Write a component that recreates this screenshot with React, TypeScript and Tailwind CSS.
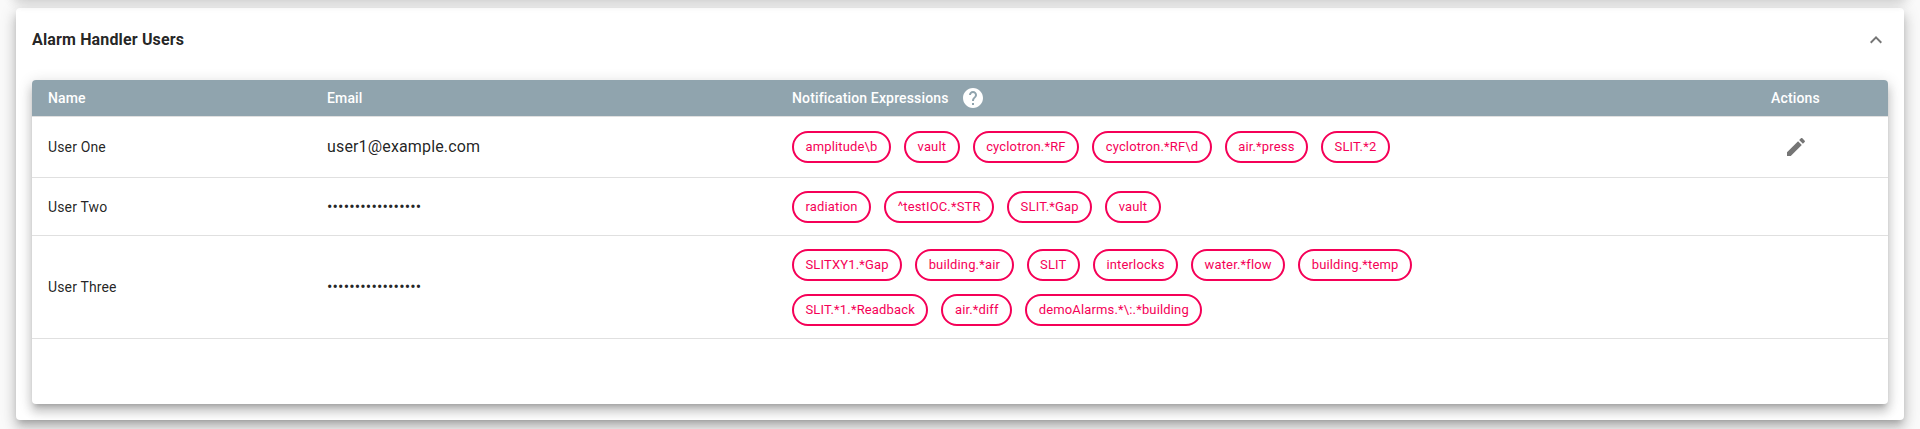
import type { ReactNode } from "react";

type User = { name: string; email: string; rows: string[][]; height: string; editable?: boolean };

const MASK = "•••••••••••••••••";

const users: User[] = [
  {
    name: "User One",
    email: "user1@example.com",
    rows: [["amplitude\\b", "vault", "cyclotron.*RF", "cyclotron.*RF\\d", "air.*press", "SLIT.*2"]],
    height: "h-[61px]",
    editable: true,
  },
  {
    name: "User Two",
    email: MASK,
    rows: [["radiation", "^testIOC.*STR", "SLIT.*Gap", "vault"]],
    height: "h-[58px]",
  },
  {
    name: "User Three",
    email: MASK,
    rows: [
      ["SLITXY1.*Gap", "building.*air", "SLIT", "interlocks", "water.*flow", "building.*temp"],
      ["SLIT.*1.*Readback", "air.*diff", "demoAlarms.*\\:.*building"],
    ],
    height: "h-[103px]",
  },
];

const panelShadow =
  "shadow-[0px_5px_6px_-3px_rgba(0,0,0,0.2),0px_9px_12px_1px_rgba(0,0,0,0.14),0px_3px_16px_2px_rgba(0,0,0,0.12)]";
const tableShadow =
  "shadow-[0px_5px_5px_-3px_rgba(0,0,0,0.2),0px_8px_10px_1px_rgba(0,0,0,0.14),0px_3px_14px_2px_rgba(0,0,0,0.12)]";

const columns = "grid grid-cols-[279px_465px_926px_186px] items-center";

function Icon({ d, className }: { d: string; className: string }) {
  return (
    <svg viewBox="0 0 24 24" className={className} fill="currentColor">
      <path d={d} />
    </svg>
  );
}

function Chip({ children }: { children: ReactNode }) {
  return (
    <span className="flex h-8 items-center rounded-full border-2 border-[#f50057] px-[11.5px] text-[13px] whitespace-nowrap text-[#f50057]">
      {children}
    </span>
  );
}

export default function App() {
  return (
    <div className="relative h-[429px] overflow-hidden bg-[#fafafa] px-4 pt-2 font-[Roboto,sans-serif] text-[14px] leading-5 tracking-[0.15px] text-black/87">
      <div className={`absolute inset-x-4 -top-8 z-10 h-6 ${panelShadow}`} />
      <section className={`h-[412px] rounded bg-white px-4 ${panelShadow}`}>
        <header className="flex h-[72px] items-center justify-between pb-2">
          <h2 className="text-[16px] leading-6 font-bold">Alarm Handler Users</h2>
          <Icon className="size-6 text-black/54" d="M12 8l-6 6 1.41 1.41L12 10.83l4.59 4.58L18 14z" />
        </header>
        <div className={`h-[324px] rounded bg-white ${tableShadow}`}>
          <div className={`${columns} h-[37px] rounded-t border-b border-[#e0e0e0] bg-[#90a4ae] font-medium text-white`}>
            <div className="pl-4">Name</div>
            <div className="pl-4">Email</div>
            <div className="flex items-center gap-3 pl-4">
              Notification Expressions
              <Icon
                className="size-6"
                d="M12 2C6.48 2 2 6.48 2 12s4.48 10 10 10 10-4.48 10-10S17.52 2 12 2zm1 17h-2v-2h2v2zm2.07-7.75l-.9.92C13.45 12.9 13 13.5 13 15h-2v-.5c0-1.1.45-2.1 1.17-2.83l1.24-1.26c.37-.36.59-.86.59-1.41 0-1.1-.9-2-2-2s-2 .9-2 2H8c0-2.21 1.79-4 4-4s4 1.79 4 4c0 .88-.36 1.68-.93 2.25z"
              />
            </div>
            <div className="pl-px text-center">Actions</div>
          </div>
          {users.map((user) => (
            <div key={user.name} className={`${columns} ${user.height} border-b border-[#e0e0e0]`}>
              <div className="pl-4">{user.name}</div>
              <div className="pl-4 text-[16px]">{user.email}</div>
              <div className="flex flex-col gap-[13px] pl-4">
                {user.rows.map((row) => (
                  <div key={row[0]} className="flex gap-[13px]">
                    {row.map((expression) => (
                      <Chip key={expression}>{expression}</Chip>
                    ))}
                  </div>
                ))}
              </div>
              <div className="flex justify-center pl-px">
                {user.editable && (
                  <Icon
                    className="size-6 text-black/54"
                    d="M3 17.25V21h3.75L17.81 9.94l-3.75-3.75L3 17.25zM20.71 7.04c.39-.39.39-1.02 0-1.41l-2.34-2.34c-.39-.39-1.02-.39-1.41 0l-1.83 1.83 3.75 3.75 1.83-1.83z"
                  />
                )}
              </div>
            </div>
          ))}
        </div>
      </section>
    </div>
  );
}
